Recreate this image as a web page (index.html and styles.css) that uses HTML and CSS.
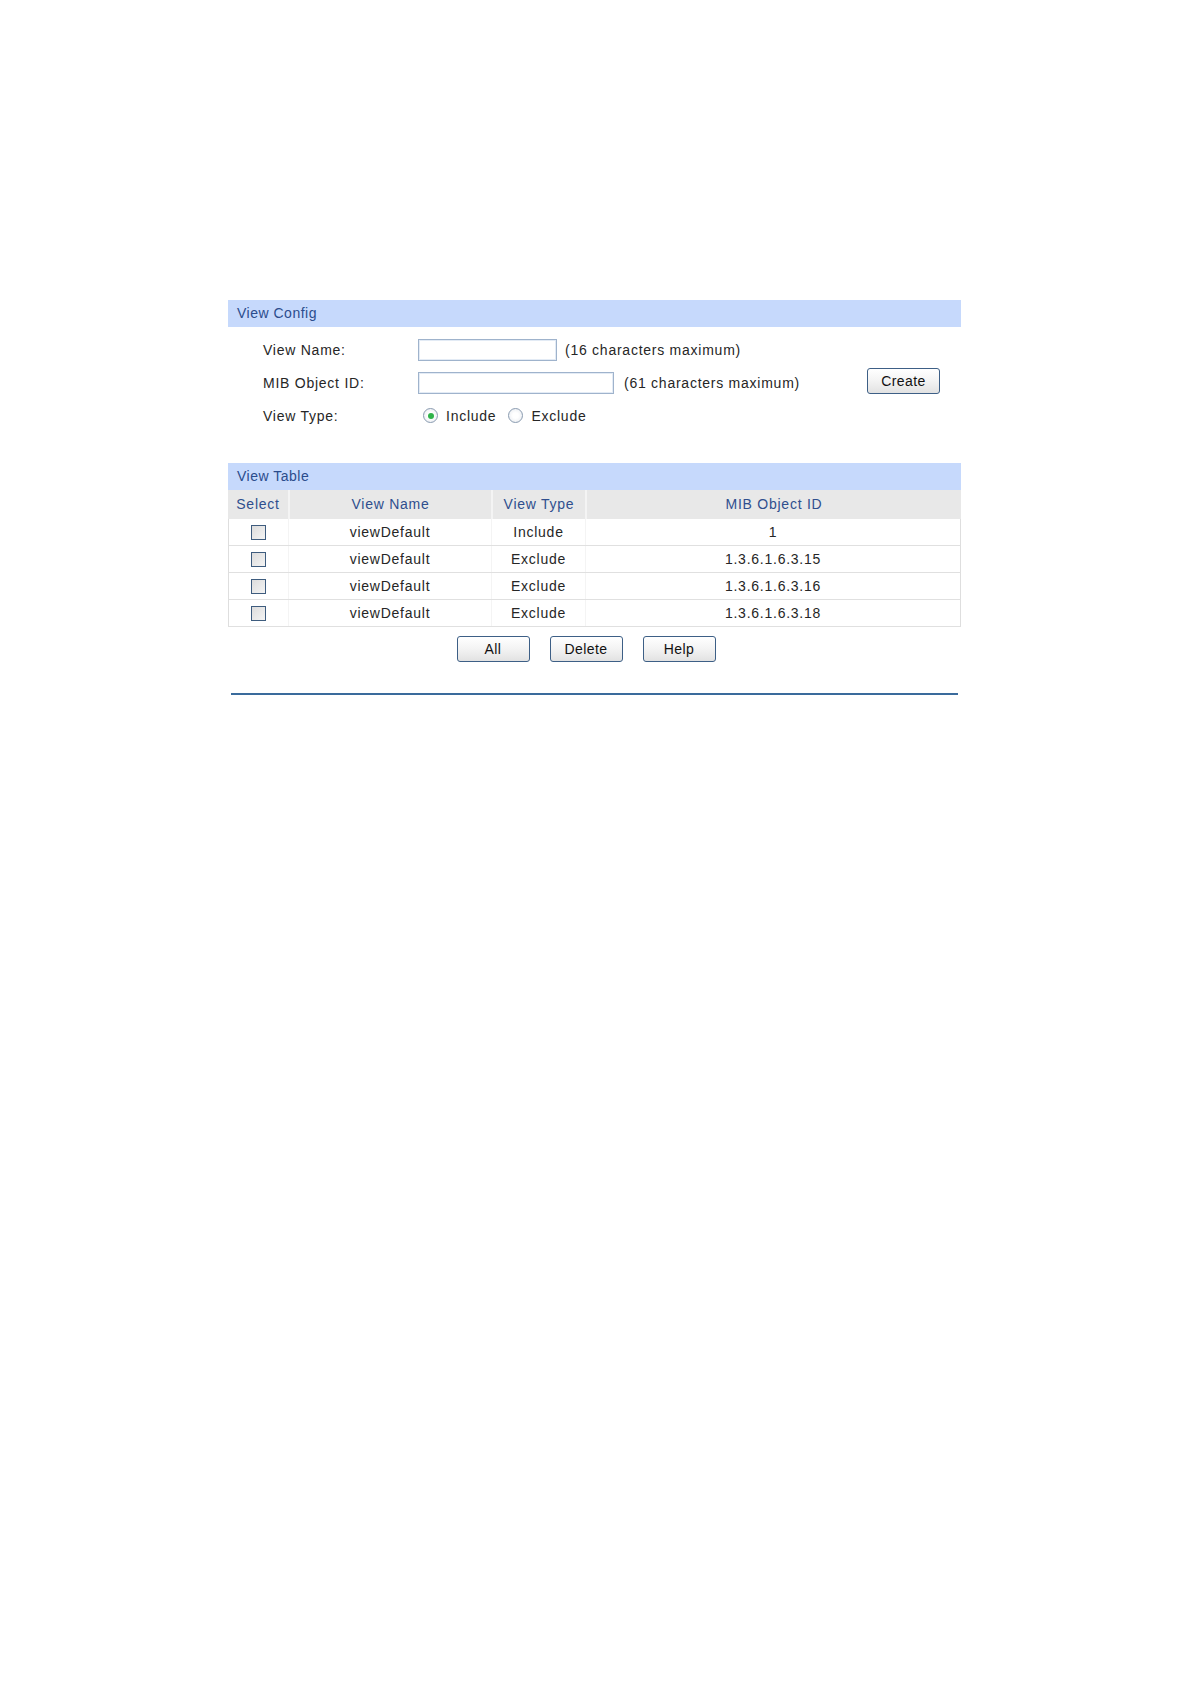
FILE: index.html
```html
<!DOCTYPE html>
<html>
<head>
<meta charset="utf-8">
<title>View Config</title>
<link rel="stylesheet" href="styles.css">
</head>
<body>
<div class="page">
  <section class="panel">
    <div class="bar">View Config</div>
    <div class="form">
      <div class="row">
        <span class="label">View Name:</span>
        <span class="input w1"></span>
        <span class="hint">(16 characters maximum)</span>
      </div>
      <div class="row">
        <span class="label">MIB Object ID:</span>
        <span class="input w2"></span>
        <span class="hint hint2">(61 characters maximum)</span>
        <span class="btn create">Create</span>
      </div>
      <div class="row">
        <span class="label">View Type:</span>
        <span class="radio on"></span><span class="rlabel">Include</span>
        <span class="radio"></span><span class="rlabel">Exclude</span>
      </div>
    </div>
  </section>

  <section class="panel table-panel">
    <div class="bar">View Table</div>
    <div class="grid head">
      <div>Select</div><div>View Name</div><div>View Type</div><div>MIB Object ID</div>
    </div>
    <div class="grid body">
      <div><span class="check"></span></div><div>viewDefault</div><div>Include</div><div>1</div>
    </div>
    <div class="grid body">
      <div><span class="check"></span></div><div>viewDefault</div><div>Exclude</div><div>1.3.6.1.6.3.15</div>
    </div>
    <div class="grid body">
      <div><span class="check"></span></div><div>viewDefault</div><div>Exclude</div><div>1.3.6.1.6.3.16</div>
    </div>
    <div class="grid body last">
      <div><span class="check"></span></div><div>viewDefault</div><div>Exclude</div><div>1.3.6.1.6.3.18</div>
    </div>
    <div class="actions">
      <span class="btn">All</span>
      <span class="btn">Delete</span>
      <span class="btn">Help</span>
    </div>
    <div class="rule"></div>
  </section>
</div>
</body>
</html>
```

FILE: styles.css
```css
html, body {
  margin: 0;
  padding: 0;
  background: #ffffff;
}

body {
  font-family: "Liberation Sans", Arial, sans-serif;
  font-size: 14px;
  letter-spacing: 0.75px;
  color: #262626;
}

.page {
  width: 733px;
  margin-left: 228px;
  padding-top: 300px;
}

.bar {
  height: 27px;
  line-height: 27px;
  background: #c6d9fc;
  color: #2b4c8c;
  padding-left: 9px;
  letter-spacing: 0.5px;
}

.form {
  padding-top: 6px;
}

.row {
  display: flex;
  align-items: center;
  height: 33px;
}

.label {
  width: 155px;
  padding-left: 35px;
  flex: none;
}

.input {
  display: inline-block;
  height: 20px;
  border: 1px solid #9fb3cc;
  box-shadow: inset 0 0 0 1px #e3ebf5;
  background: #ffffff;
  flex: none;
}

.w1 { width: 137px; }
.w2 { width: 194px; }

.hint {
  margin-left: 8px;
}

.hint2 {
  margin-left: 10px;
  flex: 1;
}

.btn {
  display: inline-flex;
  align-items: center;
  justify-content: center;
  width: 71px;
  height: 24px;
  border: 1px solid #3d5f86;
  border-radius: 3px;
  background: linear-gradient(#ffffff, #f3f3f3 50%, #e2e2e2);
  color: #111111;
  letter-spacing: 0.4px;
  box-sizing: content-box;
}

.create {
  margin-right: 21px;
  margin-top: -4px;
}

.radio {
  width: 13px;
  height: 13px;
  border: 1px solid #8a9bb0;
  border-radius: 50%;
  background: radial-gradient(circle, #ffffff 30%, #e4e8ee 100%);
  margin-left: 5px;
  position: relative;
  flex: none;
}

.radio.on::after {
  content: "";
  position: absolute;
  left: 3.5px;
  top: 3.5px;
  width: 6px;
  height: 6px;
  border-radius: 50%;
  background: #2fb34a;
}

.rlabel {
  margin-left: 8px;
  margin-right: 7px;
}

.table-panel {
  margin-top: 31px;
}

.grid {
  display: grid;
  grid-template-columns: 60px 203px 94px 1fr;
  height: 27px;
  text-align: center;
}

.grid > div {
  display: flex;
  align-items: center;
  justify-content: center;
}

.head {
  height: 29px;
  background: #e8e8e8;
  color: #2f4f8e;
}

.head > div {
  padding-bottom: 2px;
}

.head > div + div {
  border-left: 2px solid #f4f4f4;
}

.body {
  border-left: 1px solid #dedede;
  border-right: 1px solid #dedede;
  border-bottom: 1px solid #e0e0e0;
  height: 26px;
  grid-template-columns: 59px 203px 94px 1fr;
}

.body > div + div {
  border-left: 1px solid #f4f4f4;
}

.check {
  display: inline-block;
  width: 13px;
  height: 13px;
  border: 1.5px solid #3e5c7e;
  background: linear-gradient(135deg, #dcdcdc, #f4f4f4);
}

.actions {
  display: flex;
  justify-content: center;
  gap: 20px;
  margin-top: 9px;
  padding-right: 17px;
}

.rule {
  margin: 31px 3px 0 3px;
  height: 2px;
  background: #3a6b9c;
}
```
